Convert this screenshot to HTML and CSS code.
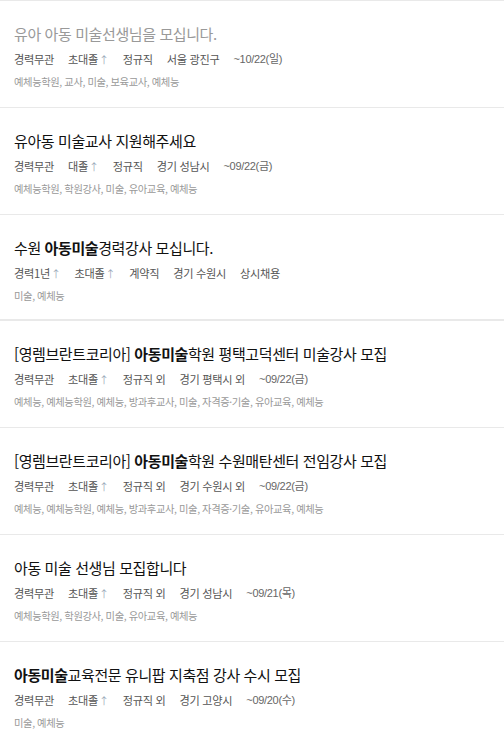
FILE: index.html
```html
<!DOCTYPE html>
<html lang="ko">
<head>
  <meta charset="UTF-8">
  <meta name="viewport" content="width=device-width, initial-scale=1.0">
  <title>아동미술 채용공고</title>
  <link rel="stylesheet" href="styles.css">
</head>
<body>
  <ul class="jobs">
    <li class="job visited">
      <h3 class="title">유아 아동 미술선생님을 모십니다.</h3>
      <p class="meta">
        <span>경력무관</span>
        <span>초대졸<i class="up">↑</i></span>
        <span>정규직</span>
        <span>서울 광진구</span>
        <span class="date">~10/22(일)</span>
      </p>
      <p class="tags">예체능학원, 교사, 미술, 보육교사, 예체능</p>
    </li>

    <li class="job">
      <h3 class="title">유아동 미술교사 지원해주세요</h3>
      <p class="meta">
        <span>경력무관</span>
        <span>대졸<i class="up">↑</i></span>
        <span>정규직</span>
        <span>경기 성남시</span>
        <span class="date">~09/22(금)</span>
      </p>
      <p class="tags">예체능학원, 학원강사, 미술, 유아교육, 예체능</p>
    </li>

    <li class="job thick">
      <h3 class="title">수원 <b>아동미술</b>경력강사 모십니다.</h3>
      <p class="meta">
        <span>경력1년<i class="up">↑</i></span>
        <span>초대졸<i class="up">↑</i></span>
        <span>계약직</span>
        <span>경기 수원시</span>
        <span>상시채용</span>
      </p>
      <p class="tags">미술, 예체능</p>
    </li>

    <li class="job">
      <h3 class="title">[영렘브란트코리아] <b>아동미술</b>학원 평택고덕센터 미술강사 모집</h3>
      <p class="meta">
        <span>경력무관</span>
        <span>초대졸<i class="up">↑</i></span>
        <span>정규직 외</span>
        <span>경기 평택시 외</span>
        <span class="date">~09/22(금)</span>
      </p>
      <p class="tags">예체능, 예체능학원, 예체능, 방과후교사, 미술, 자격증·기술, 유아교육, 예체능</p>
    </li>

    <li class="job">
      <h3 class="title">[영렘브란트코리아] <b>아동미술</b>학원 수원매탄센터 전임강사 모집</h3>
      <p class="meta">
        <span>경력무관</span>
        <span>초대졸<i class="up">↑</i></span>
        <span>정규직 외</span>
        <span>경기 수원시 외</span>
        <span class="date">~09/22(금)</span>
      </p>
      <p class="tags">예체능, 예체능학원, 예체능, 방과후교사, 미술, 자격증·기술, 유아교육, 예체능</p>
    </li>

    <li class="job">
      <h3 class="title">아동 미술 선생님 모집합니다</h3>
      <p class="meta">
        <span>경력무관</span>
        <span>초대졸<i class="up">↑</i></span>
        <span>정규직 외</span>
        <span>경기 성남시</span>
        <span class="date">~09/21(목)</span>
      </p>
      <p class="tags">예체능학원, 학원강사, 미술, 유아교육, 예체능</p>
    </li>

    <li class="job">
      <h3 class="title"><b>아동미술</b>교육전문 유니팝 지축점 강사 수시 모집</h3>
      <p class="meta">
        <span>경력무관</span>
        <span>초대졸<i class="up">↑</i></span>
        <span>정규직 외</span>
        <span>경기 고양시</span>
        <span class="date">~09/20(수)</span>
      </p>
      <p class="tags">미술, 예체능</p>
    </li>
  </ul>
</body>
</html>
```

FILE: styles.css
```css
body {
  margin: 0;
  padding: 0;
  background: #fff;
  font-family: "Noto Sans CJK KR", "Noto Sans", sans-serif;
  color: #222;
}

.jobs {
  list-style: none;
  margin: 0;
  padding: 0;
}

.job {
  height: 107px;
  box-sizing: border-box;
  padding: 23px 14px 0;
  border-top: 1px solid #e9e9e9;
}

.job.thick {
  height: 106px;
  border-bottom: 1px solid #e9e9e9;
}

.title {
  margin: 0;
  font-size: 15px;
  line-height: 20px;
  font-weight: normal;
  letter-spacing: -0.4px;
  color: #111;
  white-space: nowrap;
}

.title b {
  font-weight: 600;
}

.visited .title {
  color: #999;
}

.meta {
  display: flex;
  gap: 14px;
  margin: 6px 0 0;
  font-size: 11.2px;
  line-height: 18px;
  color: #555;
  letter-spacing: -0.3px;
}

.up {
  font-style: normal;
  font-size: 10px;
  color: #9aa8b8;
  margin-left: 1px;
}

.date {
  font-family: "Liberation Sans", "Noto Sans CJK KR", sans-serif;
  font-size: 11px;
  color: #666;
}

.tags {
  margin: 5px 0 0;
  font-size: 10.3px;
  line-height: 16px;
  color: #999;
  letter-spacing: -0.4px;
  white-space: nowrap;
}
```
